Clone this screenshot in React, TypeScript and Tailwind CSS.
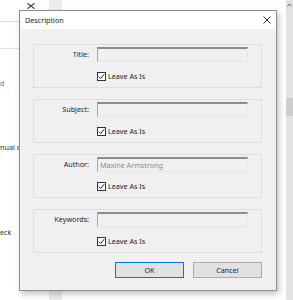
import React from "react"

const font = { fontFamily: '"Noto Sans", "Open Sans", Arial, sans-serif' }

function Field({ label, value }: { label: string; value?: string }) {
  return (
    <div className="h-[44px] border border-[#dedede] pt-[2px]">
      <div className="flex items-center">
        <div className="w-[55px] text-right text-[7.2px] text-[#1e1e1e]">{label}</div>
        <div className="ml-[8px] h-[15px] w-[151px] border-t-2 border-l border-r border-b border-t-[#8c8c8c] border-l-[#a8a8a8] border-r-[#e6e6e6] border-b-[#e6e6e6] bg-[#f0f0f0] pl-[2px] text-[7.2px] leading-[12px] text-[#8a8a8a]">
          {value}
        </div>
      </div>
      <div className="ml-[63px] mt-[9px] flex items-center gap-[2px]">
        <div className="flex h-[9px] w-[9px] items-center justify-center border border-[#333] bg-white">
          <svg width="7" height="7" viewBox="0 0 7 7">
            <path d="M0.8 3.6 L2.7 5.5 L6.2 1.2" fill="none" stroke="#222" strokeWidth="1" />
          </svg>
        </div>
        <span className="text-[7.2px] text-[#1e1e1e]">Leave As Is</span>
      </div>
    </div>
  )
}

export default function App() {
  return (
    <div className="relative h-[300px] w-[293px] overflow-hidden bg-white" style={font}>
      {/* page behind the dialog */}
      <div className="flex h-full">
        <div className="w-[49px] text-[7.2px] text-[#333]">
          <div className="flex h-[21px] justify-end pr-[14px] pt-[3px]">
            <svg width="8" height="6" viewBox="0 0 8 6">
              <path d="M0.5 0.3 L7.5 5.7 M7.5 0.3 L0.5 5.7" stroke="#444" strokeWidth="1.2" />
            </svg>
          </div>
          <div className="h-[27px] border-t border-[#e2e2e2]" />
          <div className="h-[30px] border-t border-[#e2e2e2]" />
          <div className="text-[#5a6a8a]">d</div>
          <div className="mt-[53px] whitespace-nowrap">nual c</div>
          <div className="mt-[74px]">eck</div>
        </div>
        <div className="w-[13px] bg-[#ececec]" />
        <div className="flex-1" />
        <div className="w-[7px] bg-[#e3e3e3] pt-[3px]">
          <div className="h-[95px] pl-[1px]">
            <svg width="5" height="4" viewBox="0 0 5 4">
              <path d="M0.5 3.5 L2.5 0.8 L4.5 3.5" fill="none" stroke="#666" strokeWidth="1" />
            </svg>
          </div>
          <div className="h-[18px] bg-[#cdcdcd]" />
        </div>
      </div>

      {/* dialog */}
      <div className="absolute left-[19px] top-[10px] flex h-[281px] w-[258px] flex-col border border-[#8e8e8e] bg-[#f0f0f0] shadow-[2px_3px_6px_rgba(0,0,0,0.25)]">
        <div className="flex h-[18px] items-center justify-between bg-white pl-[5px] pr-[5px]">
          <span className="text-[7.2px] text-[#1e1e1e]">Description</span>
          <svg width="8" height="8" viewBox="0 0 8 8">
            <path d="M0.5 0.5 L7.5 7.5 M7.5 0.5 L0.5 7.5" stroke="#333" strokeWidth="1" />
          </svg>
        </div>
        <div className="flex flex-col gap-[11px] pl-[13px] pr-[14px] pt-[15px]">
          <Field label="Title:" />
          <Field label="Subject:" />
          <Field label="Author:" value="Maxine Armstrong" />
          <Field label="Keywords:" />
        </div>
        <div className="mt-[9px] flex justify-end gap-[9px] pr-[14px]">
          <button className="h-[16px] w-[69px] border border-[#0078d7] bg-[#e1e1e1] text-[7.2px] text-[#1e1e1e]">OK</button>
          <button className="h-[16px] w-[69px] border border-[#adadad] bg-[#e1e1e1] text-[7.2px] text-[#1e1e1e]">Cancel</button>
        </div>
      </div>
    </div>
  )
}
